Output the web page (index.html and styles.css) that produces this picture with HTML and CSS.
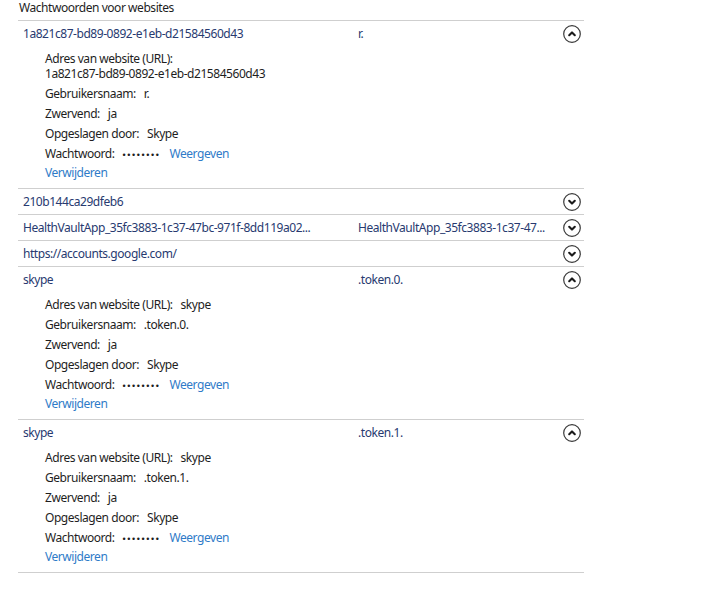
FILE: index.html
```html
<!DOCTYPE html>
<html lang="nl">
<head>
<meta charset="utf-8">
<title>Wachtwoorden voor websites</title>
<link rel="stylesheet" href="styles.css">
</head>
<body>
<div class="vault">
  <div class="vault-head">Wachtwoorden voor websites</div>

  <div class="entry open">
    <div class="entry-row">
      <span class="col-site">1a821c87-bd89-0892-e1eb-d21584560d43</span>
      <span class="col-user">r.</span>
      <svg class="toggle" viewBox="0 0 18 18"><circle cx="9" cy="9" r="8.3"/><path d="M6.2 10.2 L9 7.4 L11.8 10.2"/></svg>
    </div>
    <div class="details">
      <div class="item wrap">Adres van website (URL):<br>1a821c87-bd89-0892-e1eb-d21584560d43</div>
      <div class="item"><span class="label">Gebruikersnaam:</span><span class="value">r.</span></div>
      <div class="item"><span class="label">Zwervend:</span><span class="value">ja</span></div>
      <div class="item"><span class="label">Opgeslagen door:</span><span class="value">Skype</span></div>
      <div class="item"><span class="label">Wachtwoord:</span><span class="value dots">••••••••</span><a class="link show">Weergeven</a></div>
      <div class="item remove"><a class="link">Verwijderen</a></div>
    </div>
  </div>

  <div class="entry">
    <div class="entry-row">
      <span class="col-site">210b144ca29dfeb6</span>
      <span class="col-user"></span>
      <svg class="toggle" viewBox="0 0 18 18"><circle cx="9" cy="9" r="8.3"/><path d="M6.2 7.8 L9 10.6 L11.8 7.8"/></svg>
    </div>
  </div>

  <div class="entry">
    <div class="entry-row">
      <span class="col-site">HealthVaultApp_35fc3883-1c37-47bc-971f-8dd119a02...</span>
      <span class="col-user">HealthVaultApp_35fc3883-1c37-47...</span>
      <svg class="toggle" viewBox="0 0 18 18"><circle cx="9" cy="9" r="8.3"/><path d="M6.2 7.8 L9 10.6 L11.8 7.8"/></svg>
    </div>
  </div>

  <div class="entry">
    <div class="entry-row">
      <span class="col-site">https://accounts.google.com/</span>
      <span class="col-user"></span>
      <svg class="toggle" viewBox="0 0 18 18"><circle cx="9" cy="9" r="8.3"/><path d="M6.2 7.8 L9 10.6 L11.8 7.8"/></svg>
    </div>
  </div>

  <div class="entry open">
    <div class="entry-row">
      <span class="col-site">skype</span>
      <span class="col-user">.token.0.</span>
      <svg class="toggle" viewBox="0 0 18 18"><circle cx="9" cy="9" r="8.3"/><path d="M6.2 10.2 L9 7.4 L11.8 10.2"/></svg>
    </div>
    <div class="details">
      <div class="item"><span class="label">Adres van website (URL):</span><span class="value">skype</span></div>
      <div class="item"><span class="label">Gebruikersnaam:</span><span class="value">.token.0.</span></div>
      <div class="item"><span class="label">Zwervend:</span><span class="value">ja</span></div>
      <div class="item"><span class="label">Opgeslagen door:</span><span class="value">Skype</span></div>
      <div class="item"><span class="label">Wachtwoord:</span><span class="value dots">••••••••</span><a class="link show">Weergeven</a></div>
      <div class="item remove"><a class="link">Verwijderen</a></div>
    </div>
  </div>

  <div class="entry open">
    <div class="entry-row">
      <span class="col-site">skype</span>
      <span class="col-user">.token.1.</span>
      <svg class="toggle" viewBox="0 0 18 18"><circle cx="9" cy="9" r="8.3"/><path d="M6.2 10.2 L9 7.4 L11.8 10.2"/></svg>
    </div>
    <div class="details">
      <div class="item"><span class="label">Adres van website (URL):</span><span class="value">skype</span></div>
      <div class="item"><span class="label">Gebruikersnaam:</span><span class="value">.token.1.</span></div>
      <div class="item"><span class="label">Zwervend:</span><span class="value">ja</span></div>
      <div class="item"><span class="label">Opgeslagen door:</span><span class="value">Skype</span></div>
      <div class="item"><span class="label">Wachtwoord:</span><span class="value dots">••••••••</span><a class="link show">Weergeven</a></div>
      <div class="item remove"><a class="link">Verwijderen</a></div>
    </div>
  </div>
</div>
</body>
</html>
```

FILE: styles.css
```css
html, body {
  margin: 0;
  padding: 0;
  background: #fff;
}

body {
  font-family: "Noto Sans", "Open Sans", sans-serif;
  font-size: 12px;
  letter-spacing: -0.45px;
  color: #1e1e1e;
}

.vault {
  width: 566px;
  margin-left: 18px;
}

.vault-head {
  padding-left: 1px;
  line-height: 16px;
  padding-bottom: 4px;
  border-bottom: 1px solid #cfcfcf;
}

.entry {
  border-bottom: 1px solid #cfcfcf;
}

.entry-row {
  display: flex;
  align-items: center;
  height: 25px;
  padding: 0 3px 0 5px;
  color: #283a70;
}

.col-site {
  width: 322px;
  margin-right: 13px;
  white-space: nowrap;
  overflow: hidden;
}

.col-user {
  flex: 1;
  margin-right: 10px;
  white-space: nowrap;
  overflow: hidden;
}

.toggle {
  width: 18px;
  height: 18px;
  flex: none;
}

.toggle circle {
  fill: none;
  stroke: #3a3a3a;
  stroke-width: 1.2;
}

.toggle path {
  fill: none;
  stroke: #1a1a1a;
  stroke-width: 2.1;
  stroke-linecap: round;
  stroke-linejoin: round;
}

.details {
  width: 300px;
  padding: 5px 0 8px 27px;
}

.item {
  height: 15px;
  line-height: 15px;
  margin-bottom: 5px;
}

.item.wrap {
  height: 30px;
}

.item.remove {
  margin-top: -1px;
  margin-bottom: 0;
}

.value {
  margin-left: 8px;
}

.dots {
  font-family: "Liberation Sans", sans-serif;
  font-size: 9px;
  letter-spacing: 1.6px;
  margin-right: 9px;
}

.link {
  color: #2f7bc8;
}
```
